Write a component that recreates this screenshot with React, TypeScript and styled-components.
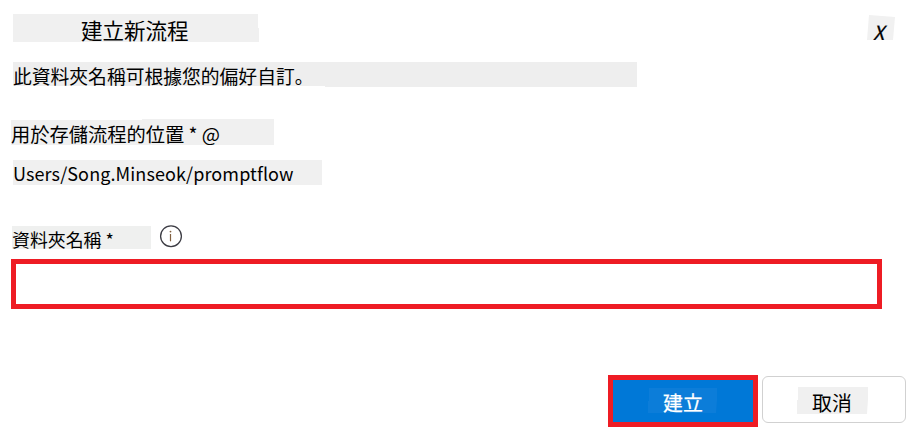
import React from "react";
import styled, { createGlobalStyle } from "styled-components";

const GlobalStyle = createGlobalStyle`
  * { box-sizing: border-box; }
  body {
    margin: 0;
    background: #fff;
    color: #000;
    font-family: "Noto Sans CJK JP", "Noto Sans CJK SC", sans-serif;
  }
`;

const Dialog = styled.main`
  display: flex;
  flex-direction: column;
  width: 910px;
  height: 441px;
  padding: 14px 4px 0 11px;
  overflow: hidden;
`;

const Header = styled.header`
  display: flex;
  justify-content: space-between;
  align-items: flex-start;
  height: 48px;
  padding: 0 11px 0 2px;
`;

const Title = styled.h1`
  margin: 0;
  width: 246px;
  height: 28px;
  padding: 2px 0 0 68px;
  background: #f0f0f0;
  clip-path: polygon(0 0, 245px 0, 245px 14px, 246px 14px, 246px 28px, 0 28px);
  font-size: 21.5px;
  font-weight: 400;
  line-height: 28px;
  white-space: nowrap;
`;

const CloseButton = styled.button`
  width: 28px;
  height: 26px;
  margin-top: 1px;
  padding: 3px 0 0 6px;
  border: 0;
  background: #f1f1f1;
  clip-path: polygon(2px 0, 28px 2px, 26px 25px, 0 25px);
  color: #000;
  font-family: inherit;
  font-size: 19.5px;
  font-style: italic;
  line-height: 27px;
  text-align: left;
  -webkit-text-stroke: 0.2px currentColor;
`;

const Description = styled.p`
  margin: 0 0 0 2px;
  width: 624px;
  height: 25px;
  background: #eee;
  clip-path: polygon(0 0, 100% 0, 100% 100%, 312px 100%, 312px 24px, 0 24px);
  font-size: 18.8px;
  line-height: 27px;
  white-space: nowrap;
`;

const LocationLabel = styled.div`
  margin-top: 32px;
  width: 263px;
  height: 26px;
  padding: 2px 0 0 0;
  background: #f0f0f0;
  clip-path: polygon(0 1px, 131px 1px, 131px 0, 100% 0, 100% 100%, 0 100%);
  font-size: 19.25px;
  line-height: 26px;
  white-space: pre;
`;

const LocationPath = styled.div`
  margin: 15px 0 0 2px;
  width: 309px;
  height: 25px;
  background: #f0f0f0;
  font-size: 18px;
  line-height: 27px;
  letter-spacing: 0.1px;
  white-space: nowrap;
`;

const FieldHeader = styled.div`
  display: flex;
  align-items: flex-start;
  gap: 8px;
  height: 34px;
  margin: 40px 0 0 1px;
`;

const FieldLabel = styled.label`
  width: 139px;
  height: 23px;
  margin-top: 1px;
  background: #eff0ef;
  font-size: 17.9px;
  line-height: 27px;
  white-space: pre;
`;

const NameInput = styled.input`
  width: 871px;
  height: 50px;
  flex: none;
  padding: 0 10px;
  border: 5px solid #ee1c24;
  border-radius: 0;
  outline: 0;
  background: #fff;
  font: inherit;
`;

const Footer = styled.footer`
  display: flex;
  justify-content: flex-end;
  align-items: flex-start;
  gap: 4px;
  margin-top: 66px;
`;

const Button = styled.button<{ $primary?: boolean }>`
  display: flex;
  align-items: flex-start;
  width: ${(p) => (p.$primary ? 150 : 144)}px;
  height: ${(p) => (p.$primary ? 52 : 47)}px;
  margin-top: ${(p) => (p.$primary ? 0 : 1)}px;
  padding: ${(p) => (p.$primary ? "8px 0 0 35px" : "10px 0 0 34px")};
  border: ${(p) => (p.$primary ? "5px solid #ee1c24" : "1px solid #d1d1d1")};
  border-radius: ${(p) => (p.$primary ? 0 : 6)}px;
  background: ${(p) => (p.$primary ? "#0078d7" : "#fff")};
  color: ${(p) => (p.$primary ? "#fff" : "#000")};
  font-family: inherit;
  font-size: 19.9px;
  line-height: ${(p) => (p.$primary ? 30 : 32)}px;
  -webkit-text-stroke: ${(p) => (p.$primary ? "0.25px" : "0")} currentColor;
`;

const ButtonText = styled.span<{ $primary?: boolean }>`
  width: ${(p) => (p.$primary ? 69 : 71)}px;
  height: ${(p) => (p.$primary ? 25 : 27)}px;
  padding-left: 15px;
  background: ${(p) => (p.$primary ? "#0c7dd9" : "#f0f0f0")};
  clip-path: polygon(1px 0, 100% 0, 100% 12px, calc(100% - 1px) 100%, 0 100%, 0 13px, 1px 13px);
  text-align: left;
`;

const InfoIcon = () => (
  <svg width="24" height="24" viewBox="0 0 24 24" fill="none" aria-hidden="true">
    <circle cx="12" cy="11.2" r="10.4" stroke="#3c3c44" strokeWidth="1.3" />
    <path d="M11.5 9v7.3" stroke="#806040" strokeWidth="1.2" />
    <circle cx="11.5" cy="6.6" r="0.9" fill="#806040" />
  </svg>
);

export default function App() {
  return (
    <>
      <GlobalStyle />
      <Dialog>
        <Header>
          <Title>建立新流程</Title>
          <CloseButton>X</CloseButton>
        </Header>
        <Description>此資料夾名稱可根據您的偏好自訂。</Description>
        <LocationLabel>用於存儲流程的位置 * @</LocationLabel>
        <LocationPath>Users/Song.Minseok/promptflow</LocationPath>
        <FieldHeader>
          <FieldLabel htmlFor="folder-name">資料夾名稱 *</FieldLabel>
          <InfoIcon />
        </FieldHeader>
        <NameInput id="folder-name" />
        <Footer>
          <Button $primary>
            <ButtonText $primary>建立</ButtonText>
          </Button>
          <Button>
            <ButtonText>取消</ButtonText>
          </Button>
        </Footer>
      </Dialog>
    </>
  );
}
